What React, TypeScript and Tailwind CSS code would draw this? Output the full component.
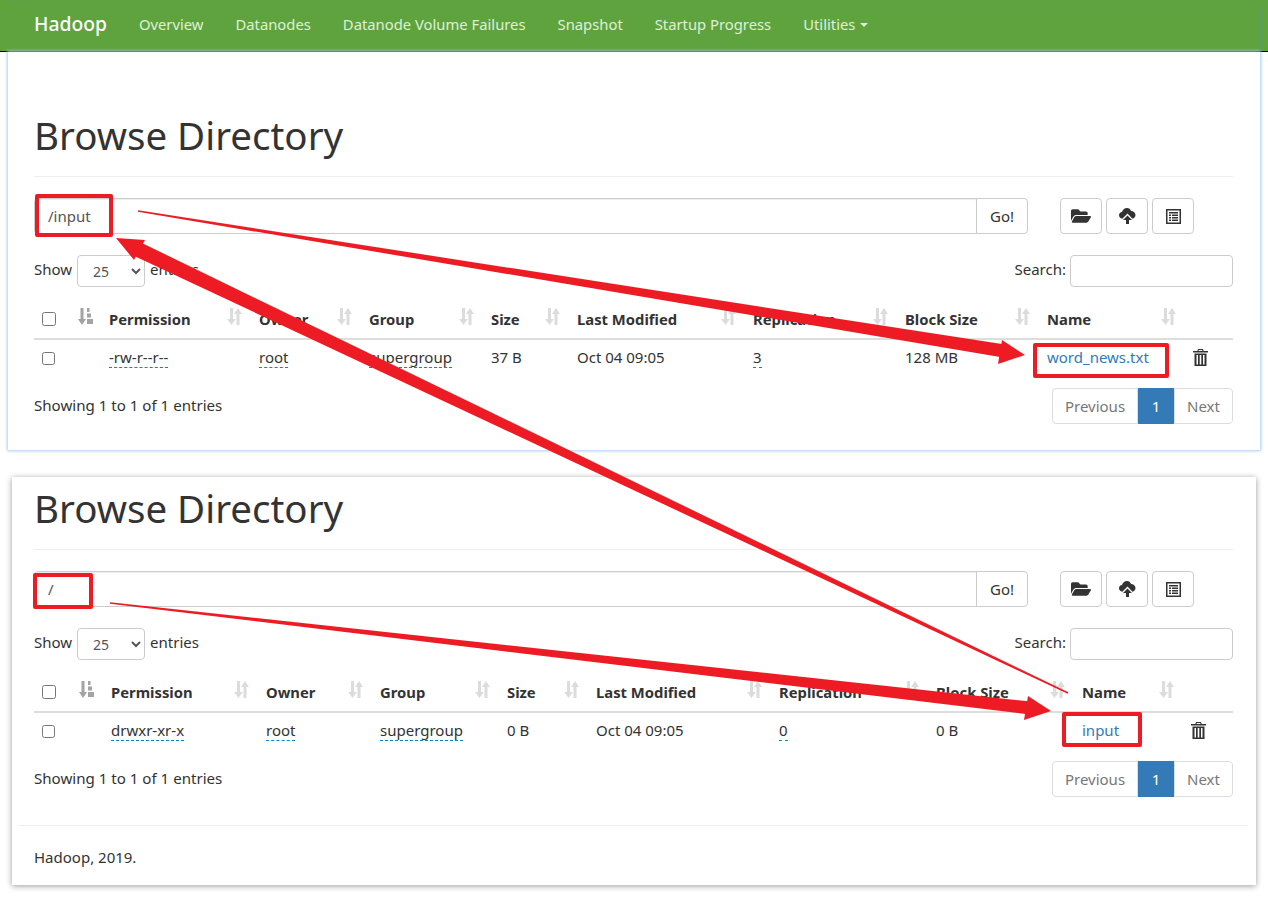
import { FaFolderOpen } from "react-icons/fa";

const NAV_LINKS = ["Overview", "Datanodes", "Datanode Volume Failures", "Snapshot", "Startup Progress"];

const TOP_LISTING = {
  path: "/input",
  cols: ["w-[35px]", "w-[32px]", "w-[150px]", "w-[110px]", "w-[122px]", "w-[86px]", "w-[176px]", "w-[152px]", "w-[142px]", "w-[146px]", "w-[48px]"],
  row: { permission: "-rw-r--r--", size: "37 B", replication: "3", blockSize: "128 MB", name: "word_news.txt" },
};

const BOTTOM_LISTING = {
  path: "/",
  cols: ["w-[35px]", "w-[34px]", "w-[155px]", "w-[114px]", "w-[127px]", "w-[89px]", "w-[183px]", "w-[157px]", "w-[146px]", "w-[109px]", "w-[50px]"],
  row: { permission: "drwxr-xr-x", size: "0 B", replication: "0", blockSize: "0 B", name: "input" },
};

const HEADERS = ["Permission", "Owner", "Group", "Size", "Last Modified", "Replication", "Block Size", "Name"];

function SortIcon() {
  return (
    <svg width="15" height="17" viewBox="0 0 15 17" className="-mt-[5px] shrink-0 fill-[#dcdcdc]">
      <path d="M3 0h3v11h3l-4.500 6L0 11h3zM9.500 17V6H7l4-6 4 6h-2.500v11z" />
    </svg>
  );
}

function SortedIcon() {
  return (
    <svg width="15" height="17" viewBox="0 0 15 17" className="mx-auto -mt-[5px] fill-[#a3a3a3]">
      <path d="M2.500 0h3v11H8l-4 6-4-6h2.500zM9 0h2.500v4H9zM9 5.500h4v4H9zM9 11h6v5H9z" />
    </svg>
  );
}

function CloudUpIcon() {
  return (
    <svg width="17" height="16" viewBox="0 0 17 16" className="fill-[#333]">
      <path d="M8 0c2 0 3.500 1.300 4 3 2.500 0 4.500 1.700 4.500 4 0 1.800-1.300 3.200-3 3.700L8.500 5.500 3.300 10.700C1.400 10.300 0 9 0 7.200 0 5.500 1.300 4.200 3 4c.5-2.300 2.500-4 5-4z" />
      <path d="M8.500 7.500 13 12h-3v4H7v-4H4z" />
    </svg>
  );
}

function ListAltIcon() {
  return (
    <svg width="15" height="15" viewBox="0 0 15 15" className="fill-[#333]">
      <path
        fillRule="evenodd"
        d="M0 0h15v15H0zM1.500 1.500v12h12v-12zM3 3h9v1.500H3zM3 5.500h2v1.500H3zM6 5.500h6v1.500H6zM3 8h2v1.500H3zM6 8h6v1.500H6zM3 10.500h2V12H3zM6 10.500h6V12H6z"
      />
    </svg>
  );
}

function TrashIcon() {
  return (
    <svg width="15" height="17" viewBox="0 0 15 17" className="-mt-[2px] fill-[#333]">
      <path
        fillRule="evenodd"
        d="M5 0h5l.7 2H15v1.500H0V2h4.300zM5.800 1l-.3 1h4l-.3-1zM1.500 4.500h12V17h-12zM3.500 6v9.500h1.500V6zM6.700 6v9.500h1.600V6zM10 6v9.500h1.500V6z"
      />
    </svg>
  );
}

function Editable({ children }: { children: string }) {
  return <span className="border-b border-dashed border-[#0088cc]">{children}</span>;
}

type Listing = typeof TOP_LISTING;

function BrowseListing({ listing, titleClass }: { listing: Listing; titleClass: string }) {
  const { path, cols, row } = listing;
  return (
    <div>
      <h1 className={`flex items-center border-b border-[#eee] text-[38.500px] text-[#333] ${titleClass}`}>Browse Directory</h1>

      <div className="mt-[21px] flex h-[36px]">
        <input
          readOnly
          value={path}
          className="h-full w-[943px] rounded-l border border-[#ccc] px-[13px] text-[15px] text-[#555] shadow-[inset_0_1px_1px_rgba(0,0,0,0.075)]"
        />
        <button className="-ml-px h-full w-[52px] rounded-r border border-[#ccc] text-[15px] text-[#333]">Go!</button>
        <div className="ml-[32px] flex gap-[4px]">
          <button className="flex h-full w-[42px] items-center justify-center rounded border border-[#ccc]">
            <FaFolderOpen className="text-[20px] text-[#333]" />
          </button>
          <button className="flex h-full w-[42px] items-center justify-center rounded border border-[#ccc]">
            <CloudUpIcon />
          </button>
          <button className="flex h-full w-[42px] items-center justify-center rounded border border-[#ccc]">
            <ListAltIcon />
          </button>
        </div>
      </div>

      <div className="mt-[21px] flex h-[32px] items-center justify-between text-[15px] text-[#333]">
        <div className="flex items-center gap-[5px]">
          <span className="pb-[4px]">Show</span>
          <select className="h-[32px] w-[68px] rounded border border-[#ccc] pl-[11px] text-[14px] text-[#555]" defaultValue="25">
            <option>25</option>
            <option>50</option>
            <option>100</option>
          </select>
          <span className="pb-[4px]">entries</span>
        </div>
        <div className="flex items-center gap-[4px]">
          <span className="pb-[4px]">Search:</span>
          <input className="h-[32px] w-[163px] rounded border border-[#ccc]" />
        </div>
      </div>

      <table className="mt-[13px] w-full table-fixed border-collapse text-[15px] text-[#333]">
        <colgroup>
          {cols.map((col, i) => (
            <col key={i} className={col} />
          ))}
        </colgroup>
        <thead>
          <tr className="h-[39px] border-b-2 border-[#ddd]">
            <th className="px-2">
              <input type="checkbox" className="block h-[14px] w-[14px]" />
            </th>
            <th>
              <SortedIcon />
            </th>
            {HEADERS.map((h) => (
              <th key={h} className="pr-[9px] pl-2 text-left text-[14.800px] font-bold">
                <div className="flex items-center justify-between whitespace-nowrap">
                  <span>{h}</span>
                  <SortIcon />
                </div>
              </th>
            ))}
            <th />
          </tr>
        </thead>
        <tbody>
          <tr className="h-[38px]">
            <td className="px-2">
              <input type="checkbox" className="block h-[13px] w-[13px]" />
            </td>
            <td />
            <td className="px-2 pb-[3px]">
              <Editable>{row.permission}</Editable>
            </td>
            <td className="px-2 pb-[3px]">
              <Editable>root</Editable>
            </td>
            <td className="px-2 pb-[3px]">
              <Editable>supergroup</Editable>
            </td>
            <td className="px-2 pb-[3px]">{row.size}</td>
            <td className="px-2 pb-[3px] whitespace-nowrap">Oct 04 09:05</td>
            <td className="px-2 pb-[3px]">
              <Editable>{row.replication}</Editable>
            </td>
            <td className="px-2 pb-[3px]">{row.blockSize}</td>
            <td className="px-2 pb-[3px] whitespace-nowrap text-[#337ab7]">{row.name}</td>
            <td className="px-2">
              <TrashIcon />
            </td>
          </tr>
        </tbody>
      </table>

      <div className="mt-[11px] flex items-center justify-between text-[15px] text-[#333]">
        <span className="pb-[1px] text-[15.100px]">Showing 1 to 1 of 1 entries</span>
        <div className="flex h-[36px] text-[#777]">
          <span className="flex w-[86px] items-center justify-center rounded-l border border-[#ddd]">Previous</span>
          <span className="flex w-[36px] items-center justify-center bg-[#337ab7] text-white">1</span>
          <span className="flex w-[59px] items-center justify-center rounded-r border border-[#ddd]">Next</span>
        </div>
      </div>
    </div>
  );
}

function shaft(x1: number, y1: number, x2: number, y2: number, w1: number, w2: number) {
  const len = Math.hypot(x2 - x1, y2 - y1);
  const nx = -(y2 - y1) / len;
  const ny = (x2 - x1) / len;
  return [
    [x1 + (nx * w1) / 2, y1 + (ny * w1) / 2],
    [x2 + (nx * w2) / 2, y2 + (ny * w2) / 2],
    [x2 - (nx * w2) / 2, y2 - (ny * w2) / 2],
    [x1 - (nx * w1) / 2, y1 - (ny * w1) / 2],
  ]
    .map((p) => p.join(","))
    .join(" ");
}

function Annotations() {
  return (
    <>
      <svg width="1268" height="898" className="pointer-events-none absolute top-0 left-0 fill-[#ed1c24]">
        <polygon points={shaft(138, 211, 1004, 351, 1.5, 13)} />
        <polygon points="1025,355 1002,340 998,364" />
        <polygon points={shaft(1068, 693, 137, 249, 1.5, 15)} />
        <polygon points="116,238 145,240 134,260" />
        <polygon points={shaft(110, 603, 1030, 708, 1.5, 13)} />
        <polygon points="1051,711 1028,696 1024,720" />
      </svg>
      <div className="absolute top-[194px] left-[35px] h-[43px] w-[78px] rounded-[2px] border-[4px] border-[#ed1c24]" />
      <div className="absolute top-[343px] left-[1033px] h-[35px] w-[136px] rounded-[2px] border-[4px] border-[#ed1c24]" />
      <div className="absolute top-[573px] left-[33px] h-[36px] w-[60px] rounded-[2px] border-[4px] border-[#ed1c24]" />
      <div className="absolute top-[712px] left-[1062px] h-[35px] w-[80px] rounded-[2px] border-[4px] border-[#ed1c24]" />
    </>
  );
}

export default function App() {
  return (
    <div className="relative h-[898px] w-[1268px] overflow-hidden bg-white font-['Noto_Sans',sans-serif]">
      <nav className="h-[52px] border-b border-black bg-[#5fa33e] px-[7px] pt-[5px]">
        <div className="flex h-full items-center gap-[32px] border-x border-t border-[#5a9c6b] pb-[9px] pl-[26px] text-[14.800px] text-[#dff0d8]">
          <span className="text-[19.300px] font-medium text-white">Hadoop</span>
          {NAV_LINKS.map((link) => (
            <span key={link}>{link}</span>
          ))}
          <span className="flex items-center gap-[5px]">
            Utilities
            <span className="mt-[2px] border-x-[4px] border-t-[4px] border-x-transparent border-t-[#dff0d8]" />
          </span>
        </div>
      </nav>

      <section className="mx-[8px] h-[398px] bg-white pt-[48px] pr-[27px] pl-[26px] shadow-[0_0_3px_1px_#a5ccf8]">
        <BrowseListing listing={TOP_LISTING} titleClass="h-[77px] pb-[5px]" />
      </section>

      <section className="mx-[12px] mt-[27px] h-[408px] bg-white pr-[23px] pl-[22px] shadow-[0_1px_6px_rgba(0,0,0,0.4)]">
        <BrowseListing listing={BOTTOM_LISTING} titleClass="h-[73px] pb-[9px]" />
        <footer className="-mr-[15px] -ml-[16px] mt-[28px] border-t border-[#eee] pt-[20px] pl-[16px] text-[15px] text-[#333]">
          Hadoop, 2019.
        </footer>
      </section>

      <Annotations />
    </div>
  );
}
